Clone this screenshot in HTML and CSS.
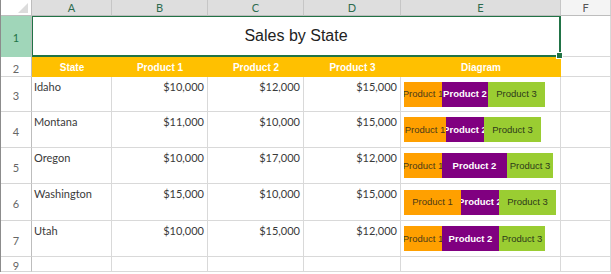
FILE: index.html
```html
<!DOCTYPE html>
<html lang="en">
<head>
    <meta charset="utf-8">
    <title>Sales by State</title>
    <link rel="stylesheet" href="styles.css">
</head>
<body>
    <div class="sheet">
        <!-- column headers -->
        <div class="corner"><span class="tri"></span></div>
        <div class="colhead sel">A</div>
        <div class="colhead sel">B</div>
        <div class="colhead sel">C</div>
        <div class="colhead sel">D</div>
        <div class="colhead sel">E</div>
        <div class="colhead">F</div>

        <!-- row 1 -->
        <div class="rowhead sel">1</div>
        <div class="title">Sales by State<span class="handle"></span></div>
        <div class="cell"></div>

        <!-- row 2 -->
        <div class="rowhead">2</div>
        <div class="head">State</div>
        <div class="head">Product 1</div>
        <div class="head">Product 2</div>
        <div class="head">Product 3</div>
        <div class="head">Diagram</div>
        <div class="cell"></div>

        <!-- row 3 -->
        <div class="rowhead">3</div>
        <div class="cell">Idaho</div>
        <div class="cell num">$10,000</div>
        <div class="cell num">$12,000</div>
        <div class="cell num">$15,000</div>
        <div class="cell chart">
            <div class="bar">
                <span class="seg p1" style="width: 38px">Product 1</span>
                <span class="seg p2" style="width: 46px">Product 2</span>
                <span class="seg p3" style="width: 57px">Product 3</span>
            </div>
        </div>
        <div class="cell"></div>

        <!-- row 4 -->
        <div class="rowhead">4</div>
        <div class="cell">Montana</div>
        <div class="cell num">$11,000</div>
        <div class="cell num">$10,000</div>
        <div class="cell num">$15,000</div>
        <div class="cell chart">
            <div class="bar">
                <span class="seg p1" style="width: 42px">Product 1</span>
                <span class="seg p2" style="width: 38px">Product 2</span>
                <span class="seg p3" style="width: 57px">Product 3</span>
            </div>
        </div>
        <div class="cell"></div>

        <!-- row 5 -->
        <div class="rowhead">5</div>
        <div class="cell">Oregon</div>
        <div class="cell num">$10,000</div>
        <div class="cell num">$17,000</div>
        <div class="cell num">$12,000</div>
        <div class="cell chart">
            <div class="bar">
                <span class="seg p1" style="width: 38px">Product 1</span>
                <span class="seg p2" style="width: 65px">Product 2</span>
                <span class="seg p3" style="width: 46px">Product 3</span>
            </div>
        </div>
        <div class="cell"></div>

        <!-- row 6 -->
        <div class="rowhead">6</div>
        <div class="cell">Washington</div>
        <div class="cell num">$15,000</div>
        <div class="cell num">$10,000</div>
        <div class="cell num">$15,000</div>
        <div class="cell chart">
            <div class="bar">
                <span class="seg p1" style="width: 57px">Product 1</span>
                <span class="seg p2" style="width: 38px">Product 2</span>
                <span class="seg p3" style="width: 57px">Product 3</span>
            </div>
        </div>
        <div class="cell"></div>

        <!-- row 7 -->
        <div class="rowhead">7</div>
        <div class="cell">Utah</div>
        <div class="cell num">$10,000</div>
        <div class="cell num">$15,000</div>
        <div class="cell num">$12,000</div>
        <div class="cell chart">
            <div class="bar">
                <span class="seg p1" style="width: 38px">Product 1</span>
                <span class="seg p2" style="width: 57px">Product 2</span>
                <span class="seg p3" style="width: 46px">Product 3</span>
            </div>
        </div>
        <div class="cell"></div>

        <!-- row 9 (row 8 hidden) -->
        <div class="rowhead">9</div>
        <div class="cell"></div>
        <div class="cell"></div>
        <div class="cell"></div>
        <div class="cell"></div>
        <div class="cell"></div>
        <div class="cell"></div>
    </div>
</body>
</html>
```

FILE: styles.css
```css
body {
    margin: 0;
    background: #fff;
    font-family: 'Lato', 'Liberation Sans', sans-serif;
    color: #3a3a3a;
}

.sheet {
    display: grid;
    grid-template-columns: 31px 80px 96px 96px 97px 160px 50px;
    grid-template-rows: 16px 41px 20px 35px 36px 36px 37px 36px 15px;
    border-left: 1px solid #8c8c8c;
    width: 610px;
}

.sheet > div {
    box-sizing: border-box;
}

.corner {
    position: relative;
    background: #fff;
    border-right: 1px solid #bdbdbd;
    border-bottom: 1px solid #bdbdbd;
}

.corner .tri {
    position: absolute;
    right: 3px;
    bottom: 2px;
    width: 0;
    height: 0;
    border-left: 10px solid transparent;
    border-bottom: 10px solid #dcdcdc;
}

.colhead {
    background: #f4f4f4;
    border-right: 1px solid #d0d0d0;
    border-bottom: 1px solid #bdbdbd;
    font-size: 11px;
    line-height: 16px;
    text-align: center;
    color: #555;
}

.colhead.sel {
    background: #dedede;
    color: #2d6b4e;
    border-right-color: #c6c6c6;
}

.rowhead {
    background: #fff;
    border-right: 1px solid #bdbdbd;
    border-bottom: 1px solid #d6d6d6;
    font-size: 11px;
    color: #666;
    display: flex;
    align-items: center;
    justify-content: center;
    padding-top: 3px;
}

.rowhead.sel {
    background: #a0d6b9;
    color: #217346;
    border-bottom-color: #a0d6b9;
}

.title {
    grid-column: 2 / 7;
    position: relative;
    border: 2px solid #217346;
    border-left-width: 1px;
    border-top-width: 1px;
    display: flex;
    align-items: center;
    justify-content: center;
    font-family: 'Liberation Sans', Arial, sans-serif;
    font-size: 16px;
    color: #222;
}

.handle {
    position: absolute;
    right: -4px;
    bottom: -4px;
    width: 5px;
    height: 5px;
    background: #217346;
    border: 1px solid #fff;
}

.head {
    background: #ffc000;
    color: #fff;
    font-family: 'Liberation Sans', Arial, sans-serif;
    font-weight: bold;
    font-size: 10px;
    display: flex;
    align-items: center;
    justify-content: center;
    padding-top: 1px;
}

.cell {
    border-right: 1px solid #d9d9d9;
    border-bottom: 1px solid #d9d9d9;
    font-size: 11px;
    line-height: 14px;
    padding: 3px 2px 0 2px;
    white-space: nowrap;
}

.num {
    text-align: right;
    padding-right: 3px;
}

.chart {
    display: flex;
    align-items: center;
    padding: 0 0 0 3px;
}

.bar {
    display: flex;
    height: 25px;
}

.seg {
    display: flex;
    align-items: center;
    justify-content: center;
    overflow: hidden;
    white-space: nowrap;
    font-family: 'Liberation Sans', Arial, sans-serif;
    font-size: 9.5px;
}

.p1 {
    background: #ffa000;
    color: #4a3a1a;
}

.p2 {
    background: #800080;
    color: #fff;
    font-weight: bold;
}

.p3 {
    background: #9acd32;
    color: #2d3a1a;
}
```
